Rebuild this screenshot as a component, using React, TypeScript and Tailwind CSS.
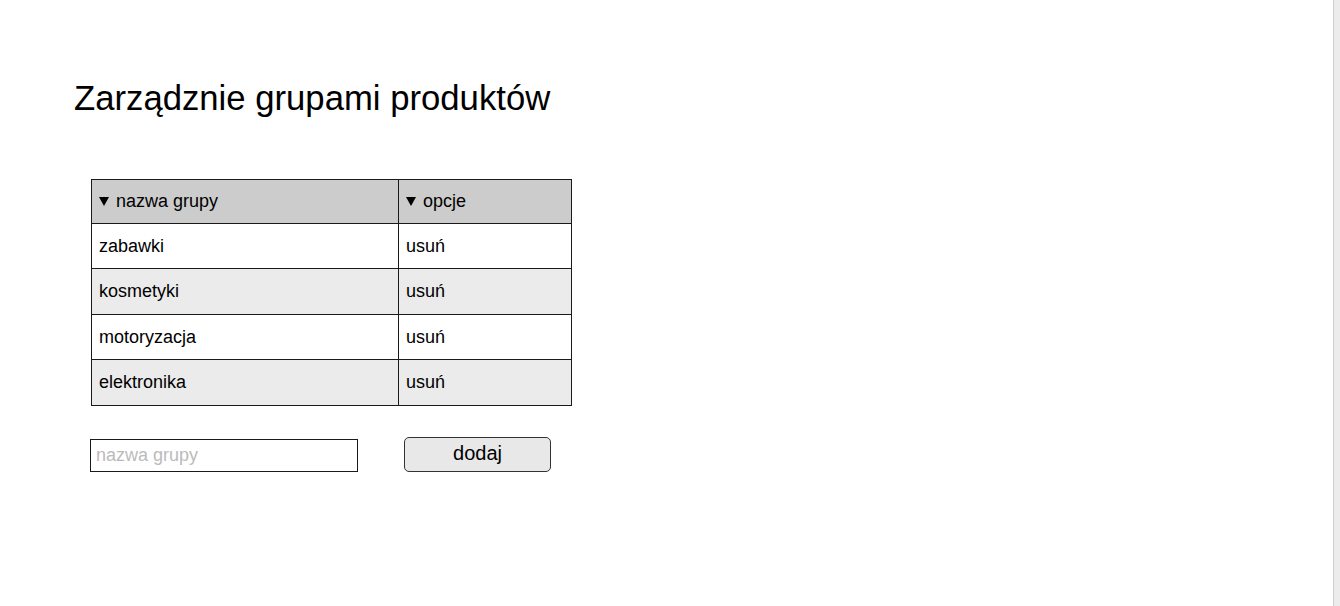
import React from "react";

const rows = ["zabawki", "kosmetyki", "motoryzacja", "elektronika"];

function Arrow() {
  return (
    <span className="mr-[7px] inline-block h-0 w-0 border-x-[5px] border-t-[9px] border-x-transparent border-t-black align-[1px]" />
  );
}

export default function App() {
  return (
    <div className="flex h-[606px] w-[1340px] bg-white font-['Liberation_Sans',Arial,sans-serif] text-black">
      <main className="flex-1 pl-[74px] pt-[78px]">
        <h1 className="text-[34.7px] leading-[40px]">Zarządznie grupami produktów</h1>

        {/* table */}
        <table className="ml-[17px] mt-[61px] w-[481px] border-collapse text-[18px]">
          <thead>
            <tr className="h-[44px] bg-[#cccccc]">
              <th className="w-[307px] border border-[#1a1a1a] px-[7px] text-left font-normal">
                <Arrow />nazwa grupy
              </th>
              <th className="border border-[#1a1a1a] px-[7px] text-left font-normal">
                <Arrow />opcje
              </th>
            </tr>
          </thead>
          <tbody>
            {rows.map((r, i) => (
              <tr key={r} className={i % 2 ? "h-[46px] bg-[#ebebeb]" : "h-[45px] bg-white"}>
                <td className="border border-[#1a1a1a] px-[7px]">{r}</td>
                <td className="border border-[#1a1a1a] px-[7px]">usuń</td>
              </tr>
            ))}
          </tbody>
        </table>

        {/* add form */}
        <div className="ml-4 mt-[31px] flex items-end">
          <input
            placeholder="nazwa grupy"
            className="h-[33px] w-[268px] border border-[#1a1a1a] px-[5px] text-[18px] outline-none placeholder:text-[#bbbbbb]"
          />
          <button className="ml-[46px] h-[35px] w-[147px] rounded-[5px] border border-[#333] bg-[#e8e8e8] pb-[3px] text-[20px]">
            dodaj
          </button>
        </div>
      </main>
      <div className="w-[7px] border-l border-[#cfcfcf] bg-[#ececec]" />
    </div>
  );
}
